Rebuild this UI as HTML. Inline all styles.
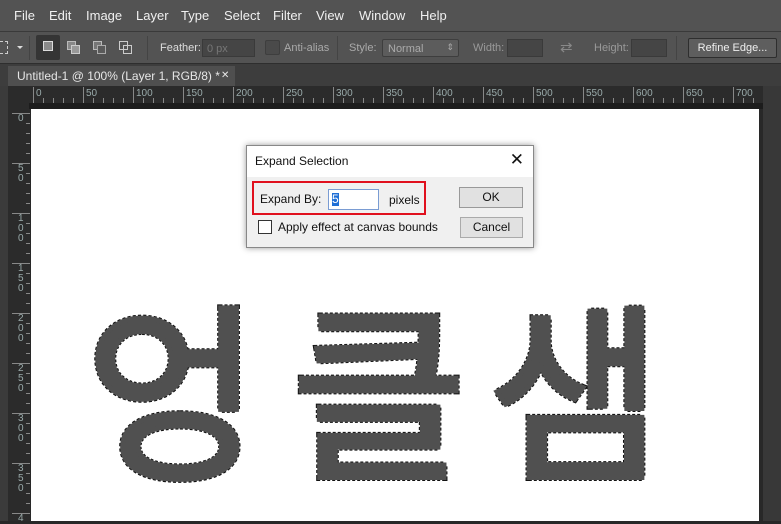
<!DOCTYPE html>
<html><head><meta charset="utf-8"><style>
*{margin:0;padding:0;box-sizing:border-box}
body{width:781px;height:521px;overflow:hidden;background:#282828;font-family:"Liberation Sans",sans-serif;position:relative}
.abs{position:absolute}
#menu{left:0;top:0;width:781px;height:32px;background:#535353;border-bottom:1px solid #3a3a3a;color:#f0f0f0;font-size:13px}
#menu span{position:absolute;top:8px}
#opts{left:0;top:32px;width:781px;height:32px;background:#535353;border-bottom:1px solid #2e2e2e;font-size:11px;color:#bdbdbd}
#tabs{left:0;top:64px;width:781px;height:22px;background:#3d3d3d}
.inp{position:absolute;background:#454545;border:1px solid #3a3a3a}
#hr span{position:absolute;top:2px;font-size:10px;color:#9aa}
#vr span{position:absolute;left:10px;font-size:10px;color:#9aa;width:8px;line-height:10px;word-break:break-all}
</style></head><body>
<div id="menu" class="abs">
<span style="left:14px">File</span><span style="left:49px">Edit</span><span style="left:86px">Image</span><span style="left:136px">Layer</span><span style="left:181px">Type</span><span style="left:224px">Select</span><span style="left:273px">Filter</span><span style="left:316px">View</span><span style="left:359px">Window</span><span style="left:420px">Help</span>
</div>
<div id="opts" class="abs">
<div class="abs" style="left:0;top:9px;width:8px;height:13px;border:1px dashed #ccc;border-left:none"></div>
<div class="abs" style="left:17px;top:14px;width:0;height:0;border-left:3px solid transparent;border-right:3px solid transparent;border-top:3px solid #ddd"></div>
<div class="abs" style="left:29px;top:4px;width:1px;height:24px;background:#444"></div>
<div class="abs" style="left:36px;top:3px;width:24px;height:25px;background:#353535;border-radius:2px"></div>
<div class="abs" style="left:43px;top:9px;width:10px;height:10px;background:#8a8a8a;border:1px solid #ddd"></div>
<div class="abs" style="left:67px;top:9px;width:9px;height:9px;background:#888;border:1px solid #bbb"></div>
<div class="abs" style="left:71px;top:13px;width:9px;height:9px;background:#999;border:1px solid #ccc"></div>
<div class="abs" style="left:93px;top:9px;width:9px;height:9px;border:1px solid #bbb;background:#777"></div>
<div class="abs" style="left:97px;top:13px;width:9px;height:9px;background:#5a5a5a;border:1px solid #aaa"></div>
<div class="abs" style="left:119px;top:9px;width:9px;height:9px;border:1px solid #ccc"></div>
<div class="abs" style="left:123px;top:13px;width:9px;height:9px;border:1px solid #ccc"></div>
<div class="abs" style="left:147px;top:4px;width:1px;height:24px;background:#444"></div>
<span class="abs" style="left:160px;top:10px;color:#ddd">Feather:</span>
<div class="inp" style="left:202px;top:7px;width:53px;height:18px"><span style="position:absolute;left:4px;top:3px;color:#777">0 px</span></div>
<div class="abs" style="left:265px;top:8px;width:15px;height:15px;background:#4a4a4a;border:1px solid #3e3e3e;border-radius:2px"></div>
<span class="abs" style="left:284px;top:10px;color:#aaa">Anti-alias</span>
<div class="abs" style="left:337px;top:4px;width:1px;height:24px;background:#444"></div>
<span class="abs" style="left:349px;top:10px;color:#aaa">Style:</span>
<div class="abs" style="left:382px;top:7px;width:77px;height:18px;background:#5c5c5c;border:1px solid #3e3e3e;border-radius:2px"><span style="position:absolute;left:5px;top:3px;color:#aaa">Normal</span><span style="position:absolute;right:4px;top:2px;color:#aaa;font-size:9px">⇕</span></div>
<span class="abs" style="left:473px;top:10px;color:#999">Width:</span>
<div class="inp" style="left:507px;top:7px;width:36px;height:18px"></div>
<span class="abs" style="left:560px;top:6px;color:#888;font-size:15px">⇄</span>
<span class="abs" style="left:594px;top:10px;color:#999">Height:</span>
<div class="inp" style="left:631px;top:7px;width:36px;height:18px"></div>
<div class="abs" style="left:676px;top:4px;width:1px;height:24px;background:#444"></div>
<div class="abs" style="left:688px;top:6px;width:89px;height:20px;background:#5e5e5e;border:1px solid #2e2e2e;border-radius:2px;color:#eee;text-align:center;line-height:18px">Refine Edge...</div>
</div>
<div id="tabs" class="abs">
<div class="abs" style="left:8px;top:2px;width:227px;height:20px;background:#4f4f4f;color:#e6e6e6;font-size:12px;line-height:20px;padding-left:9px">Untitled-1 @ 100% (Layer 1, RGB/8) *<span style="position:absolute;left:213px;font-size:10px">✕</span></div>
</div>
<div class="abs" style="left:0;top:86px;width:8px;height:435px;background:#3b3b3b"></div>
<div class="abs" style="left:763px;top:86px;width:18px;height:435px;background:#383838"></div>
<div id="hr" class="abs" style="left:8px;top:86px;width:755px;height:17px;background:#2b2b2b">
<div class="abs" style="left:25px;top:12px;width:730px;height:5px;background:repeating-linear-gradient(90deg,#888 0 1px,transparent 1px 10px)"></div>
<div class="abs" style="left:25px;top:1px;width:730px;height:16px;background:repeating-linear-gradient(90deg,#888 0 1px,transparent 1px 50px)"></div>
<span style="left:28px">0</span><span style="left:78px">50</span><span style="left:128px">100</span><span style="left:178px">150</span><span style="left:228px">200</span><span style="left:278px">250</span><span style="left:328px">300</span><span style="left:378px">350</span><span style="left:428px">400</span><span style="left:478px">450</span><span style="left:528px">500</span><span style="left:578px">550</span><span style="left:628px">600</span><span style="left:678px">650</span><span style="left:728px">700</span>
</div>
<div id="vr" class="abs" style="left:8px;top:103px;width:22px;height:418px;background:#2b2b2b">
<div class="abs" style="left:18px;top:10px;width:4px;height:410px;background:repeating-linear-gradient(180deg,#888 0 1px,transparent 1px 10px)"></div>
<div class="abs" style="left:4px;top:10px;width:18px;height:410px;background:repeating-linear-gradient(180deg,#888 0 1px,transparent 1px 50px)"></div>
<span style="top:11px">0</span><span style="top:61px">50</span><span style="top:111px">100</span><span style="top:161px">150</span><span style="top:211px">200</span><span style="top:261px">250</span><span style="top:311px">300</span><span style="top:361px">350</span><span style="top:411px">4</span>
</div>
<div class="abs" style="left:29px;top:103px;width:734px;height:6px;background:#1c1c1c"></div>
<div class="abs" style="left:31px;top:109px;width:728px;height:412px;background:#fff"></div>
<svg class="abs" style="left:0;top:0" width="781" height="521">
<g font-family="'Noto Sans CJK KR',sans-serif" font-weight="normal" font-size="190" text-anchor="middle" stroke-linejoin="miter">
<g fill="none" stroke="#111" stroke-width="7" stroke-dasharray="3 2">
<text x="173" y="465">엉</text><text x="379" y="465">클</text><text x="575" y="465">샘</text>
</g>
<g fill="#505050" stroke="#505050" stroke-width="5">
<text x="173" y="465">엉</text><text x="379" y="465">클</text><text x="575" y="465">샘</text>
</g>
</g>
</svg>
<div class="abs" style="left:246px;top:145px;width:288px;height:103px;background:#f0f0f0;border:1px solid #888;box-shadow:0 0 6px rgba(0,0,0,.4);font-size:12px;color:#111">
<div style="height:31px;background:#fff;position:relative"><span style="position:absolute;left:8px;top:8px">Expand Selection</span><span style="position:absolute;right:9px;top:4px;font-size:17px">✕</span></div>
<div class="abs" style="left:5px;top:35px;width:174px;height:34px;border:2px solid #e0101e"></div>
<span class="abs" style="left:13px;top:46px">Expand By:</span>
<div class="abs" style="left:81px;top:43px;width:51px;height:21px;background:#fff;border:1px solid #7a9cd3"><span style="position:absolute;left:3px;top:3px;background:#1f6fd6;color:#fff;line-height:13px">5</span></div>
<span class="abs" style="left:142px;top:47px">pixels</span>
<div class="abs" style="left:212px;top:41px;width:64px;height:21px;background:#e1e1e1;border:1px solid #999;text-align:center;line-height:19px">OK</div>
<div class="abs" style="left:213px;top:71px;width:63px;height:21px;background:#e1e1e1;border:1px solid #aaa;text-align:center;line-height:19px">Cancel</div>
<div class="abs" style="left:11px;top:74px;width:14px;height:14px;background:#fff;border:1px solid #333"></div>
<span class="abs" style="left:31px;top:74px">Apply effect at canvas bounds</span>
</div>
</body></html>
